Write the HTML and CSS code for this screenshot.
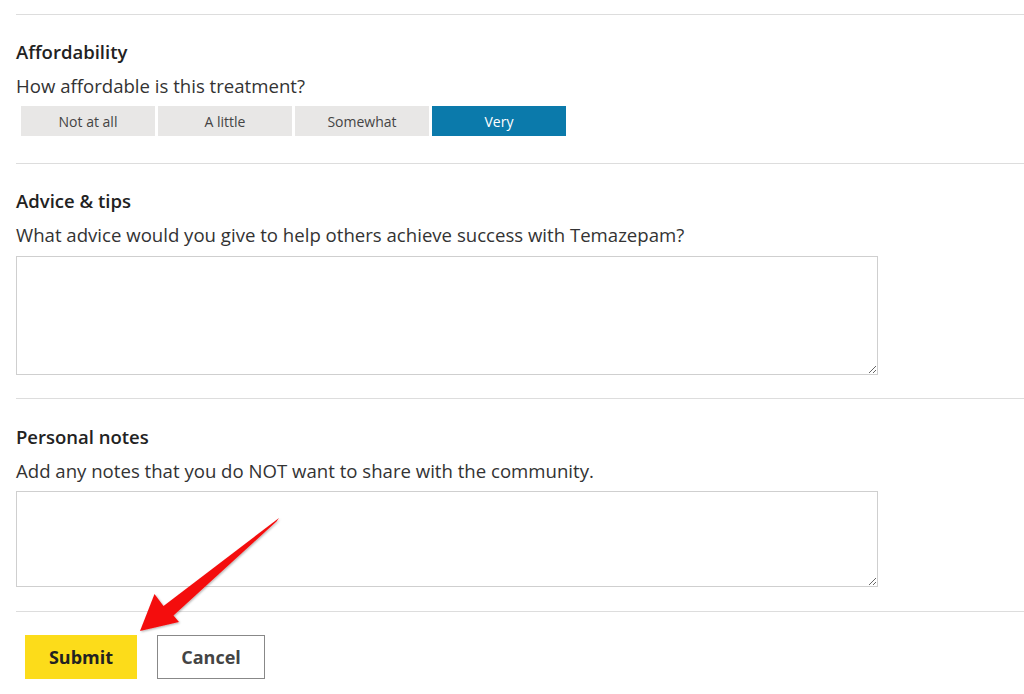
FILE: index.html
```html
<!DOCTYPE html>
<html lang="en">
<head>
    <meta charset="UTF-8">
    <meta name="viewport" content="width=device-width, initial-scale=1.0">
    <title>Review form</title>
    <link rel="stylesheet" href="styles.css">
</head>
<body>
    <form class="review-form">
        <div class="section section-first">
            <h3 class="section-title">Affordability</h3>
            <p class="section-question">How affordable is this treatment?</p>
            <div class="choices">
                <button type="button" class="choice">Not at all</button>
                <button type="button" class="choice">A little</button>
                <button type="button" class="choice">Somewhat</button>
                <button type="button" class="choice selected">Very</button>
            </div>
        </div>

        <div class="section section-advice">
            <h3 class="section-title">Advice &amp; tips</h3>
            <p class="section-question">What advice would you give to help others achieve success with Temazepam?</p>
            <textarea class="field field-advice"></textarea>
        </div>

        <div class="section section-notes">
            <h3 class="section-title">Personal notes</h3>
            <p class="section-question">Add any notes that you do NOT want to share with the community.</p>
            <textarea class="field field-notes"></textarea>
        </div>

        <div class="section actions">
            <button type="submit" class="btn btn-submit">Submit</button>
            <button type="button" class="btn btn-cancel">Cancel</button>
        </div>
    </form>

    <!-- annotation arrow -->
    <svg class="arrow" width="1024" height="694" viewBox="0 0 1024 694">
        <defs>
            <filter id="shadow" x="-20%" y="-20%" width="140%" height="140%">
                <feDropShadow dx="1" dy="1" stdDeviation="1.2" flood-color="#000" flood-opacity="0.3"/>
            </filter>
        </defs>
        <path d="M279 518 L276.5 521.5 L173.5 615.5 L179 622 L140 631 L154.5 594 L163.5 606 Z" fill="#f40f0f" filter="url(#shadow)"/>
    </svg>
</body>
</html>
```

FILE: styles.css
```css
* {
    box-sizing: border-box;
}

body {
    margin: 0;
    padding: 14px 0 0 16px;
    font-family: 'Open Sans', Lato, sans-serif;
    color: #222;
    background: #fff;
    overflow: hidden;
}

.section {
    border-top: 1px solid #ddd;
    padding: 25px 0 25px 0;
}

.section-first {
    padding-bottom: 27px;
}

.section-advice {
    padding-bottom: 23px;
}

.section-notes {
    padding-top: 26px;
    padding-bottom: 24px;
}

.section-title {
    margin: 0;
    font-size: 18.5px;
    line-height: 24px;
    font-weight: 600;
    color: #222;
}

.section-question {
    margin: 10px 0 0 0;
    font-size: 18.6px;
    line-height: 24px;
    color: #333;
}

.choices {
    display: flex;
    gap: 3px;
    margin: 8px 0 0 5px;
}

.choice {
    width: 134px;
    height: 30px;
    border: none;
    background-color: #e8e7e6;
    color: #444;
    font-family: inherit;
    font-size: 14px;
    cursor: pointer;
}

.choice.selected {
    background-color: #0b7aab;
    color: #fff;
}

.field {
    display: block;
    width: 862px;
    margin-top: 9px;
    border: 1px solid #cfcfcf;
    font-family: inherit;
    font-size: 16px;
    resize: vertical;
}

.field-advice {
    height: 119px;
}

.field-notes {
    height: 96px;
    margin-top: 8px;
}

.actions {
    display: flex;
    gap: 20px;
    padding: 23px 0 0 9px;
}

.btn {
    height: 44px;
    font-family: inherit;
    font-size: 18px;
    font-weight: 700;
    cursor: pointer;
}

.btn-submit {
    width: 112px;
    border: none;
    background-color: #fcdc1a;
    color: #222;
}

.btn-cancel {
    width: 108px;
    border: 1px solid #888;
    background-color: #fff;
    color: #444;
}

.arrow {
    position: absolute;
    top: 0;
    left: 0;
    pointer-events: none;
}
```
